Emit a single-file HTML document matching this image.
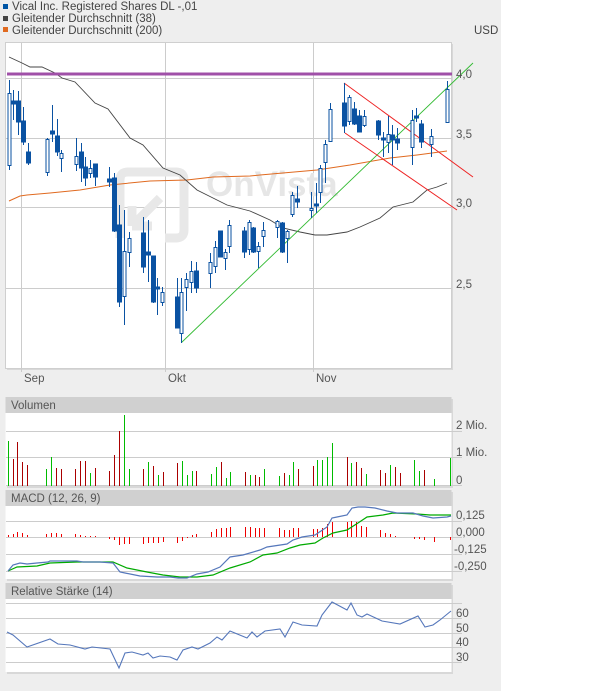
<!DOCTYPE html>
<html><head><meta charset="utf-8"><style>
html,body{margin:0;padding:0;background:#fff;}
body{width:614px;height:691px;overflow:hidden;}
</style></head><body>
<svg width="614" height="691" xmlns="http://www.w3.org/2000/svg" font-family="Liberation Sans, sans-serif">
<rect x="0" y="0" width="501" height="691" fill="#eeeeee"/>
<rect x="3" y="4" width="5" height="5" fill="#0055a5"/>
<rect x="3" y="16" width="5" height="5" fill="#444"/>
<rect x="3" y="27" width="5" height="5" fill="#e06a20"/>
<g font-size="11.5" fill="#444">
<text x="12" y="10">Vical Inc. Registered Shares DL -,01</text>
<text x="12" y="22">Gleitender Durchschnitt (38)</text>
<text x="12" y="34">Gleitender Durchschnitt (200)</text>
<text x="474" y="34">USD</text>
</g>
<rect x="7" y="44" width="446" height="326" fill="#d8d8d8"/>
<rect x="5.5" y="42.5" width="446" height="326" fill="#fff" stroke="#cfcfcf"/>
<g stroke="#cccccc" stroke-width="1">
<path d="M6 78.5H452M6 138.5H452M6 207.5H452M6 288.5H452"/>
<path d="M21.5 43V372M165.5 43V372M313.5 43V372"/>
</g>
<g fill="none" stroke="#e8e8e8" stroke-width="9">
<path d="M150 172H176Q184 172 184 180V230Q184 238 176 238H165M150 172H128Q120 172 120 180V238"/>
<path d="M132 226L160 198M132 226V206M132 226H152"/>
</g>
<text x="206" y="196" font-size="35" font-weight="bold" fill="#e6e6e6">OnVista</text>
<polyline fill="none" stroke="#e06a20" stroke-width="1" points="9,201 20,196 27,195 50,193 80,190 110,185 150,181 187,180 213,177 250,176 260,175 317,170 350,165 390,158 417,155 447,151"/>
<polyline fill="none" stroke="#444" stroke-width="0.9" points="9,57 22,63 30,67 42,67 55,73 62,78 75,82 95,103 108,109 130,138 143,145 163,168 180,175 197,190 227,205 250,211 270,220 283,228 300,232 315,235 327,235 347,232 360,227 380,218 393,207 413,202 427,190 437,187 447,183"/>
<rect x="7" y="72.5" width="445" height="3" fill="#a050a8"/>
<path d="M181.5 342.5L473 63" stroke="#33bb33" stroke-width="0.9" fill="none"/>
<path d="M344 83L473 177M345 133L457 210" stroke="#ee2222" stroke-width="1" fill="none"/>
<g stroke="#0a52a2" stroke-width="1" fill="#0a52a2">
<path fill="none" d="M9.5 80V170M13.5 90V120M18.5 91V135M23.5 107V145M28.5 143V165M47.5 138V176M52.5 105V142M57.5 119V156M61.5 150V172M76.5 138V171M81.5 143V182M85.5 157V186M90.5 160V178M95.5 164V186M109.5 167V187M114.5 173V232M119.5 205V307M124.5 210V325M129.5 232V267M143.5 217V273M148.5 220V282M153.5 256V303M157.5 278V315M162.5 287V306M177.5 278V328M181.5 278V343M186.5 273V311M191.5 261V293M196.5 262V293M210.5 253V288M215.5 241V273M220.5 231V257M225.5 249V270M229.5 220V253M244.5 227V258M249.5 220V255M253.5 227V253M258.5 242V268M263.5 222V247M277.5 220V238M282.5 222V253M287.5 230V263M292.5 192V217M297.5 186V208M311.5 192V218M316.5 183V213M320.5 165V203M325.5 140V183M330.5 103V142M344.5 83V133M349.5 95V125M354.5 102V125M359.5 110V132M364.5 110V127M378.5 120V140M383.5 132V157M388.5 116V153M392.5 125V165M397.5 128V150M412.5 110V165M416.5 108V122M421.5 120V148M431.5 129V157M447.5 81V123"/>
<rect x="11.5" y="101" width="4" height="3"/>
<rect x="16.5" y="101" width="4" height="21"/>
<rect x="21.5" y="121" width="4" height="21"/>
<rect x="26.5" y="152" width="4" height="11"/>
<rect x="50.5" y="131" width="4" height="3"/>
<rect x="55.5" y="136" width="4" height="16"/>
<rect x="79.5" y="152" width="4" height="16"/>
<rect x="83.5" y="167" width="4" height="11"/>
<rect x="93.5" y="164" width="4" height="13"/>
<rect x="107.5" y="179" width="4" height="3"/>
<rect x="112.5" y="178" width="4" height="53"/>
<rect x="117.5" y="225" width="4" height="77"/>
<rect x="141.5" y="233" width="4" height="34"/>
<rect x="146.5" y="252" width="4" height="3"/>
<rect x="151.5" y="256" width="4" height="46"/>
<rect x="155.5" y="287" width="4" height="2"/>
<rect x="175.5" y="297" width="4" height="31"/>
<rect x="194.5" y="271" width="4" height="17"/>
<rect x="218.5" y="231" width="4" height="26"/>
<rect x="242.5" y="231" width="4" height="21"/>
<rect x="251.5" y="228" width="4" height="24"/>
<rect x="280.5" y="223" width="4" height="29"/>
<rect x="295.5" y="199" width="4" height="3"/>
<rect x="314.5" y="204" width="4" height="2"/>
<rect x="342.5" y="103" width="4" height="23"/>
<rect x="352.5" y="109" width="4" height="15"/>
<rect x="357.5" y="116" width="4" height="16"/>
<rect x="376.5" y="121" width="4" height="14"/>
<rect x="381.5" y="138" width="4" height="2"/>
<rect x="390.5" y="135" width="4" height="5"/>
<rect x="395.5" y="139" width="4" height="4"/>
<rect x="414.5" y="116" width="4" height="2"/>
<rect x="419.5" y="124" width="4" height="18"/>
</g>
<g stroke="#0a52a2" stroke-width="1" fill="#fff">
<rect x="8" y="93.5" width="3" height="72"/>
<rect x="46" y="139.5" width="3" height="33"/>
<rect x="60" y="153.5" width="3" height="5"/>
<rect x="75" y="156.5" width="3" height="8"/>
<rect x="89" y="168.5" width="3" height="5"/>
<rect x="123" y="251.5" width="3" height="45"/>
<rect x="128" y="238.5" width="3" height="14"/>
<rect x="161" y="292.5" width="3" height="10"/>
<rect x="180" y="292.5" width="3" height="41"/>
<rect x="185" y="279.5" width="3" height="8"/>
<rect x="190" y="271.5" width="3" height="11"/>
<rect x="209" y="262.5" width="3" height="11"/>
<rect x="214" y="247.5" width="3" height="19"/>
<rect x="224" y="252.5" width="3" height="6"/>
<rect x="228" y="225.5" width="3" height="21"/>
<rect x="248" y="222.5" width="3" height="27"/>
<rect x="257" y="246.5" width="3" height="5"/>
<rect x="262" y="230.5" width="3" height="6"/>
<rect x="276" y="221.5" width="3" height="6"/>
<rect x="286" y="231.5" width="3" height="7"/>
<rect x="291" y="195.5" width="3" height="19"/>
<rect x="310" y="208.5" width="3" height="2"/>
<rect x="319" y="168.5" width="3" height="24"/>
<rect x="324" y="144.5" width="3" height="18"/>
<rect x="329" y="109.5" width="3" height="32"/>
<rect x="348" y="97.5" width="3" height="24"/>
<rect x="363" y="116.5" width="3" height="9"/>
<rect x="387" y="134.5" width="3" height="8"/>
<rect x="411" y="120.5" width="3" height="27"/>
<rect x="430" y="136.5" width="3" height="8"/>
<rect x="446" y="89.5" width="3" height="33"/>
</g>
<g font-size="11.5" fill="#555">
<text x="456" y="78">4,0</text>
<text x="456" y="138">3,5</text>
<text x="456" y="207">3,0</text>
<text x="456" y="288">2,5</text>
<text x="24" y="382">Sep</text>
<text x="168" y="382">Okt</text>
<text x="316" y="382">Nov</text>
</g>
<rect x="7" y="399" width="446" height="89" fill="#d8d8d8"/>
<rect x="5.5" y="397" width="446" height="16" fill="#d0d0d0"/>
<rect x="5.5" y="413" width="446" height="73" fill="#fff"/>
<g stroke="#cccccc"><path d="M6 431.5H462M6 457.5H462M6 485.5H462"/></g>
<text x="11" y="409" font-size="11.5" fill="#555">Volumen</text>
<g stroke="#00bb00" stroke-width="1" fill="none">
<path d="M8.5 441V486M46.5 469V486M51.5 457V486M90.5 473V486M124.5 415V486M129.5 469V486M148.5 462V486M158.5 475V486M182.5 461V486M187.5 475V486M192.5 471V486M211.5 474V486M216.5 467V486M226.5 478V486M230.5 472V486M250.5 475V486M264.5 469V486M279.5 476V486M289.5 475V486M293.5 462V486M317.5 460V486M322.5 460V486M327.5 457V486M332.5 443V486M351.5 463V486M366.5 474V486M390.5 465V486M414.5 460V486M419.5 471V486M434.5 479V486M450.5 458V486"/>
</g>
<g stroke="#aa0000" stroke-width="1" fill="none">
<path d="M13.5 459V486M17.5 442V486M22.5 462V486M27.5 465V486M56.5 468V486M61.5 469V486M75.5 469V486M80.5 461V486M85.5 461V486M95.5 468V486M109.5 471V486M114.5 455V486M119.5 431V486M143.5 469V486M153.5 466V486M163.5 472V486M177.5 463V486M196.5 471V486M221.5 462V486M245.5 472V486M255.5 475V486M259.5 477V486M284.5 473V486M298.5 469V486M313.5 466V486M347.5 457V486M356.5 462V486M361.5 468V486M380.5 470V486M385.5 473V486M395.5 467V486M400.5 473V486M424.5 470V486"/>
</g>
<g font-size="11.5" fill="#555">
<text x="456" y="429">2 Mio.</text>
<text x="456" y="456">1 Mio.</text>
<text x="456" y="484">0</text>
</g>
<rect x="7" y="492" width="446" height="89" fill="#d8d8d8"/>
<rect x="5.5" y="490" width="446" height="16" fill="#d0d0d0"/>
<rect x="5.5" y="506" width="446" height="73" fill="#fff"/>
<g stroke="#cccccc"><path d="M6 521.5H462M6 537.5H462M6 554.5H462M6 571.5H462"/></g>
<text x="11" y="502" font-size="11.5" fill="#555">MACD (12, 26, 9)</text>
<g stroke="#ee0000" stroke-width="1" fill="none">
<path d="M8.5 535V537M13.5 534V537M17.5 532V537M22.5 533V537M27.5 535V537M46.5 534V537M51.5 533V537M56.5 533V537M61.5 534V537M75.5 534V537M80.5 535V537M85.5 536V537M90.5 536V537M95.5 536V537M109.5 537V539M114.5 537V540M119.5 537V545M124.5 537V544M129.5 537V544M143.5 537V544M148.5 537V543M153.5 537V543M158.5 537V543M163.5 537V542M177.5 537V543M182.5 537V541M187.5 537V538M192.5 535V537M196.5 534V537M211.5 532V537M216.5 529V537M221.5 528V537M226.5 528V537M230.5 527V537M245.5 527V537M250.5 527V537M255.5 528V537M259.5 528V537M264.5 528V537M279.5 528V537M284.5 530V537M289.5 530V537M293.5 528V537M298.5 528V537M313.5 529V537M317.5 529V537M322.5 528V537M327.5 524V537M332.5 522V537M347.5 522V537M351.5 521V537M356.5 522V537M361.5 526V537M366.5 527V537M380.5 530V537M385.5 533V537M390.5 534V537M395.5 536V537M414.5 537V539M419.5 537V539M424.5 537V540M434.5 537V542M450.5 537V540"/>
</g>
<polyline fill="none" stroke="#00aa00" stroke-width="1.2" points="8,571 17,567 37,566 50,563 77,562 113,562 127,568 147,572 163,575 180,577 197,577 213,575 230,568 250,562 263,555 277,553 290,548 300,545 315,543 323,538 333,533 347,530 358,523 367,517 383,515 393,513 417,514 430,515 451,515"/>
<polyline fill="none" stroke="#5577bb" stroke-width="1.2" points="8,571 13,565 20,563 27,564 37,563 48,562 50,561 60,561 77,561 83,562 100,562 113,563 120,572 125,573 140,576 157,577 170,577 178,578 187,578 197,574 208,572 220,567 230,557 243,555 260,550 267,547 287,544 293,540 302,537 315,535 327,527 332,518 337,517 347,515 352,508 358,507 365,507 375,508 387,511 397,513 413,513 423,516 433,518 447,517 451,516"/>
<g font-size="11.5" fill="#555">
<text x="456" y="519">0,125</text>
<text x="456" y="536">0,000</text>
<text x="454" y="553">-0,125</text>
<text x="454" y="570">-0,250</text>
</g>
<rect x="7" y="585" width="446" height="89" fill="#d8d8d8"/>
<rect x="5.5" y="583" width="446" height="16" fill="#d0d0d0"/>
<rect x="5.5" y="599" width="446" height="73" fill="#fff"/>
<g stroke="#cccccc"><path d="M6 603.5H462M6 618.5H462M6 633.5H462M6 647.5H462M6 662.5H462"/></g>
<text x="11" y="595" font-size="11.5" fill="#555">Relative Stärke (14)</text>
<polyline fill="none" stroke="#5577bb" stroke-width="1.1" points="7,632 13,635 27,647 50,639 58,644 70,645 85,649 92,647 110,649 119,668 125,653 132,652 143,655 148,653 153,658 160,656 170,657 177,660 183,650 192,647 198,649 210,643 217,637 222,640 230,631 247,638 252,632 257,637 265,631 280,629 285,637 293,622 302,625 317,626 322,615 332,602 347,610 351,603 357,615 362,617 367,614 382,621 400,624 418,616 425,627 433,625 440,620 451,611"/>
<g font-size="11.5" fill="#555">
<text x="456" y="617">60</text>
<text x="456" y="632">50</text>
<text x="456" y="646">40</text>
<text x="456" y="661">30</text>
</g>
</svg>
</body></html>
